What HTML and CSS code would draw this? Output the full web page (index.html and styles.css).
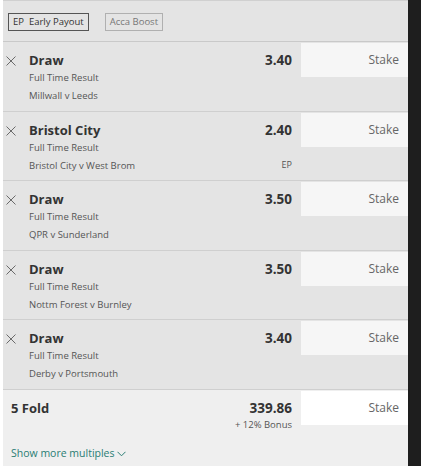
FILE: index.html
```html
<!DOCTYPE html>
<html lang="en">
<head>
  <meta charset="UTF-8" />
  <title>Bet Slip</title>
  <link rel="stylesheet" href="styles.css">
</head>
<body>
  <div class="slip">
    <div class="offers">
      <span class="offer active">EP&nbsp; Early Payout</span>
      <span class="offer">Acca Boost</span>
    </div>

    <div class="bet">
      <div class="remove"><svg width="10" height="10" viewBox="0 0 10 10"><path d="M0.5 0.5 L9.5 9.5 M9.5 0.5 L0.5 9.5" stroke="#6a6a6a" stroke-width="1"/></svg></div>
      <div class="info">
        <div class="pick">Draw</div>
        <div class="market">Full Time Result</div>
        <div class="fixture">Millwall v Leeds</div>
      </div>
      <div class="odds"><div class="price">3.40</div></div>
      <div class="stake">Stake</div>
    </div>

    <div class="bet">
      <div class="remove"><svg width="10" height="10" viewBox="0 0 10 10"><path d="M0.5 0.5 L9.5 9.5 M9.5 0.5 L0.5 9.5" stroke="#6a6a6a" stroke-width="1"/></svg></div>
      <div class="info">
        <div class="pick">Bristol City</div>
        <div class="market">Full Time Result</div>
        <div class="fixture">Bristol City v West Brom</div>
      </div>
      <div class="odds"><div class="price">2.40</div><div class="ep">EP</div></div>
      <div class="stake">Stake</div>
    </div>

    <div class="bet">
      <div class="remove"><svg width="10" height="10" viewBox="0 0 10 10"><path d="M0.5 0.5 L9.5 9.5 M9.5 0.5 L0.5 9.5" stroke="#6a6a6a" stroke-width="1"/></svg></div>
      <div class="info">
        <div class="pick">Draw</div>
        <div class="market">Full Time Result</div>
        <div class="fixture">QPR v Sunderland</div>
      </div>
      <div class="odds"><div class="price">3.50</div></div>
      <div class="stake">Stake</div>
    </div>

    <div class="bet">
      <div class="remove"><svg width="10" height="10" viewBox="0 0 10 10"><path d="M0.5 0.5 L9.5 9.5 M9.5 0.5 L0.5 9.5" stroke="#6a6a6a" stroke-width="1"/></svg></div>
      <div class="info">
        <div class="pick">Draw</div>
        <div class="market">Full Time Result</div>
        <div class="fixture">Nottm Forest v Burnley</div>
      </div>
      <div class="odds"><div class="price">3.50</div></div>
      <div class="stake">Stake</div>
    </div>

    <div class="bet">
      <div class="remove"><svg width="10" height="10" viewBox="0 0 10 10"><path d="M0.5 0.5 L9.5 9.5 M9.5 0.5 L0.5 9.5" stroke="#6a6a6a" stroke-width="1"/></svg></div>
      <div class="info">
        <div class="pick">Draw</div>
        <div class="market">Full Time Result</div>
        <div class="fixture">Derby v Portsmouth</div>
      </div>
      <div class="odds"><div class="price">3.40</div></div>
      <div class="stake">Stake</div>
    </div>

    <div class="multiple">
      <div class="fold-row">
        <div class="fold">5 Fold</div>
        <div class="odds"><div class="price">339.86</div><div class="bonus">+ 12% Bonus</div></div>
        <div class="stake">Stake</div>
      </div>
      <div class="more">Show more multiples
        <svg width="9" height="6" viewBox="0 0 9 6"><path d="M0.5 0.8 L4.5 4.8 L8.5 0.8" fill="none" stroke="#2a7d74" stroke-width="1"/></svg>
      </div>
    </div>
  </div>
</body>
</html>
```

FILE: styles.css
```css
body {
  margin: 0;
  font-family: "Open Sans", "Noto Sans", sans-serif;
  background: #fff;
  display: flex;
  align-items: flex-start;
}
.slip {
  margin-left: 3px;
  width: 405px;
  border-right: 13px solid #1e1e1e;
  background: #e4e4e4;
}
.offers {
  height: 42px;
  box-sizing: border-box;
  padding: 2px 0 0 5px;
  border-top: 1px solid #d0d0d0;
  border-bottom: 1px solid #c9c9c9;
  display: flex;
  align-items: center;
  gap: 16px;
}
.offer {
  font-size: 9.5px;
  line-height: 13px;
  color: #777;
  border: 1px solid #b0b0b0;
  padding: 1px 4px 2px;
}
.offer.active {
  color: #333;
  border-color: #555;
}
.bet {
  display: flex;
  height: 68.6px;
  border-bottom: 1px solid #cfcfcf;
}
.remove {
  width: 26px;
  padding: 14px 0 0 3px;
  box-sizing: border-box;
}
.remove svg {
  display: block;
}
.info {
  flex: 1;
  padding-top: 9px;
}
.pick {
  font-size: 13px;
  font-weight: bold;
  color: #333;
  line-height: 18px;
}
.market, .fixture {
  font-size: 9.5px;
  color: #555;
  line-height: 18px;
}
.odds {
  width: 100px;
  padding-right: 9px;
  text-align: right;
  padding-top: 9px;
}
.price {
  font-size: 13.5px;
  font-weight: bold;
  color: #333;
  line-height: 18px;
}
.ep {
  font-size: 9px;
  color: #555;
  margin-top: 19px;
}
.stake {
  width: 98px;
  height: 34px;
  margin-top: 1px;
  background: #f6f6f6;
  color: #666;
  font-size: 12px;
  text-align: right;
  padding-right: 9px;
  line-height: 34px;
}
.multiple {
  background: #efefef;
  height: 76px;
}
.fold-row {
  display: flex;
}
.fold {
  flex: 1;
  padding: 9px 0 0 8px;
  font-size: 13px;
  font-weight: bold;
  color: #333;
  line-height: 18px;
}
.bonus {
  font-size: 9.5px;
  color: #555;
  line-height: 15px;
}
.fold-row .stake {
  background: #fff;
}
.more {
  padding: 14px 0 0 8px;
  font-size: 10.5px;
  color: #2a7d74;
}
```
